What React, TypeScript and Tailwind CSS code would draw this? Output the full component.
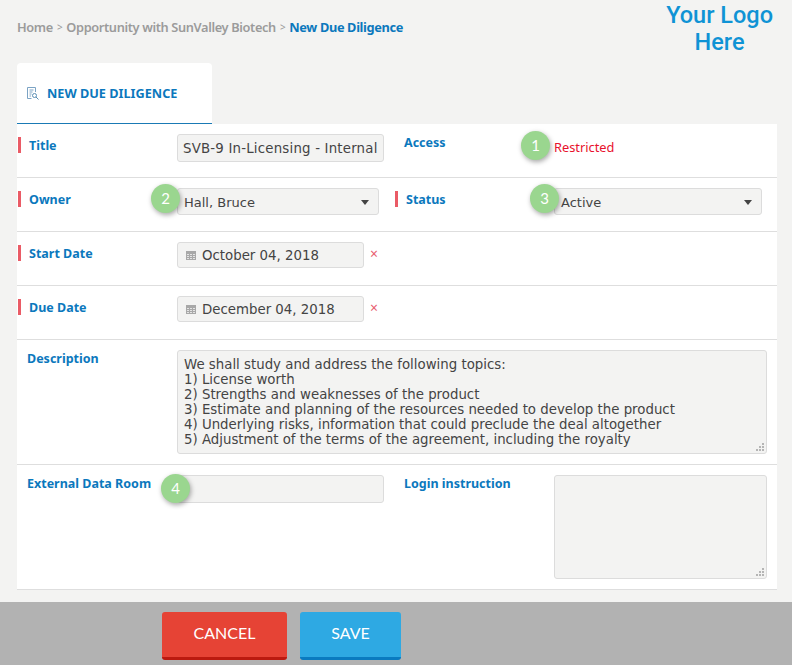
const uiFont = "[font-family:'Noto_Sans',sans-serif]";
const fieldFont = "[font-family:'DejaVu_Sans',sans-serif]";
const fieldBox = "rounded-[3px] border border-[#dcdcdc] bg-[#f3f3f2] text-[13.33px] text-[#444]";

function Badge({ n, className }: { n: number; className: string }) {
  return (
    <div className={`absolute z-10 flex h-[29px] w-[29px] items-center justify-center rounded-full bg-[#9ad68f] text-[15px] text-white shadow-[1px_2px_5px_rgba(0,0,0,0.35)] [font-family:Lato,sans-serif] ${className}`}>
      {n}
    </div>
  );
}

function FieldLabel({ text, marked, width = 'w-[160px]' }: { text: string; marked?: boolean; width?: string }) {
  return (
    <div className={`${width} shrink-0`}>
      {marked ? (
        <div className="ml-px mt-[3px] h-4 border-l-[3px] border-[#ea5b66] pl-2 pt-px text-[12.5px] leading-4 font-bold text-[#0b78bd]">{text}</div>
      ) : (
        <div className="h-4 pl-[10px] pt-px text-[12.5px] leading-4 font-bold text-[#0b78bd]">{text}</div>
      )}
    </div>
  );
}

function Caret() {
  return <span className="mb-[2px] h-0 w-0 border-x-[4px] border-t-[5px] border-x-transparent border-t-[#444]" />;
}

function CalendarIcon() {
  return (
    <svg width="10" height="9" viewBox="0 0 10 9" className="shrink-0" fill="#e4e4e4">
      <rect width="10" height="9" fill="#a8a8a8" />
      <path d="M1 3h2v1H1zM4 3h2v1H4zM7 3h2v1H7zM1 5h2v1H1zM4 5h2v1H4zM7 5h2v1H7zM1 7h2v1H1zM4 7h2v1H4zM7 7h2v1H7z" />
    </svg>
  );
}

function ResizeGrip() {
  return (
    <svg width="8" height="8" viewBox="0 0 8 8" fill="#b5b5b5" className="pointer-events-none absolute bottom-[3px] right-[3px]">
      <path d="M6 0h2v2H6zM3 3h2v2H3zM6 3h2v2H6zM0 6h2v2H0zM3 6h2v2H3zM6 6h2v2H6z" />
    </svg>
  );
}

function DateField({ label, value }: { label: string; value: string }) {
  return (
    <div className="flex h-[54px] border-b border-[#dedede] pt-[10px]">
      <FieldLabel text={label} marked />
      <div className={`flex h-[26px] w-[187px] items-center gap-[6px] pl-2 pt-px ${fieldBox} ${fieldFont}`}>
        <CalendarIcon />
        <span>{value}</span>
      </div>
      <span className="ml-[6px] mt-1 text-[14px] leading-4 text-[#e8606f]">×</span>
    </div>
  );
}

const description = `We shall study and address the following topics:
1) License worth
2) Strengths and weaknesses of the product
3) Estimate and planning of the resources needed to develop the product
4) Underlying risks, information that could preclude the deal altogether
5) Adjustment of the terms of the agreement, including the royalty`;

export default function App() {
  return (
    <div className={`flex min-h-screen flex-col bg-[#f3f3f2] ${uiFont}`}>
      <div className="flex h-[63px] items-start justify-between pr-[19px]">
        <div className="flex gap-1 pl-[17px] pt-[18px] text-[12.8px] leading-[18px] font-semibold tracking-[-0.36px] text-[#9b9b9b]">
          <span>Home</span>
          <span className="text-[10px] font-normal">&gt;</span>
          <span>Opportunity with SunValley Biotech</span>
          <span className="text-[10px] font-normal">&gt;</span>
          <span className="font-bold text-[#0b78bd]">New Due Diligence</span>
        </div>
        <div className="pt-[2px] text-center text-[23.5px] leading-[27px] font-medium text-[#0f93d5] [font-family:Roboto,sans-serif]">
          Your Logo
          <br />
          Here
        </div>
      </div>

      <div className="ml-[17px] flex h-[61px] w-[195px] items-center gap-2 rounded-t-[4px] border-b border-[#1a7ab5] bg-white pl-[10px] pt-[1px]">
        <svg width="12" height="13" viewBox="0 0 12 13" fill="none" stroke="#7ba3c4" strokeWidth="1">
          <path d="M8.5 5V.5h-8v11h4M2.5 3h4M2.5 5h3M2.5 7h2M2.5 9h1.5" />
          <circle cx="7.5" cy="8.5" r="2" stroke="#5b8fb5" />
          <path d="M9 10l2.5 2.5" stroke="#5b8fb5" />
        </svg>
        <span className="text-[12.7px] font-bold text-[#0b78bd]">NEW DUE DILIGENCE</span>
      </div>

      <div className="ml-[17px] w-[760px] bg-white">
        <div className="relative flex h-[54px] border-b border-[#dedede] pt-[10px]">
          <div className="flex w-[377px] shrink-0">
            <FieldLabel text="Title" marked />
            <div className={`flex h-[28px] w-[207px] items-center overflow-hidden whitespace-nowrap pl-[5px] pt-px tracking-[0.2px] ${fieldBox} ${fieldFont}`}>
              SVB-9 In-Licensing - Internal
            </div>
          </div>
          <FieldLabel text="Access" />
          <span className="pt-[4px] text-[12.8px] leading-[18px] text-[#e8112d]">Restricted</span>
          <Badge n={1} className="left-[504px] top-[7px]" />
        </div>

        <div className="relative flex h-[54px] border-b border-[#dedede] pt-[10px]">
          <div className="flex w-[377px] shrink-0">
            <FieldLabel text="Owner" marked />
            <div className={`flex h-[27px] w-[202px] items-center justify-between pl-[6px] pr-[9px] pt-[3px] !text-[13px] ${fieldBox} ${fieldFont}`}>
              Hall, Bruce
              <Caret />
            </div>
          </div>
          <FieldLabel text="Status" marked />
          <div className={`flex h-[27px] w-[208px] items-center justify-between pl-[6px] pr-[9px] pt-[3px] !text-[13px] ${fieldBox} ${fieldFont}`}>
            Active
            <Caret />
          </div>
          <Badge n={2} className="left-[134px] top-[6px]" />
          <Badge n={3} className="left-[513px] top-[6px]" />
        </div>

        <DateField label="Start Date" value="October 04, 2018" />
        <DateField label="Due Date" value="December 04, 2018" />

        <div className="flex h-[125px] border-b border-[#dedede] pt-[10px]">
          <FieldLabel text="Description" />
          <div className="relative h-[104px] w-[590px]">
            <textarea
              readOnly
              value={description}
              className={`h-full w-full resize-none px-[6px] pt-[6px] leading-[15px] outline-none ${fieldBox} ${fieldFont}`}
            />
            <ResizeGrip />
          </div>
        </div>

        <div className="relative flex h-[125px] border-b border-[#dedede] pt-[10px]">
          <div className="flex w-[377px] shrink-0">
            <FieldLabel text="External Data Room" />
            <div className={`h-[28px] w-[207px] ${fieldBox}`} />
          </div>
          <FieldLabel text="Login instruction" />
          <div className="relative h-[104px] w-[213px]">
            <textarea readOnly className={`h-full w-full resize-none outline-none ${fieldBox}`} />
            <ResizeGrip />
          </div>
          <Badge n={4} className="left-[144px] top-[9px]" />
        </div>
      </div>

      <div className="mt-auto flex h-[63px] gap-[13px] bg-[#b2b2b2] pl-[162px] pt-[10px] text-[16px] text-white [font-family:Lato,sans-serif]">
        <button className="h-[48px] w-[125px] rounded-[3px] border-b-[3px] border-[#bb1a10] bg-[#e64335] pb-[3px]">CANCEL</button>
        <button className="h-[48px] w-[101px] rounded-[3px] border-b-[3px] border-[#0a7bc0] bg-[#2ea9e3] pb-[3px]">SAVE</button>
      </div>
    </div>
  );
}
